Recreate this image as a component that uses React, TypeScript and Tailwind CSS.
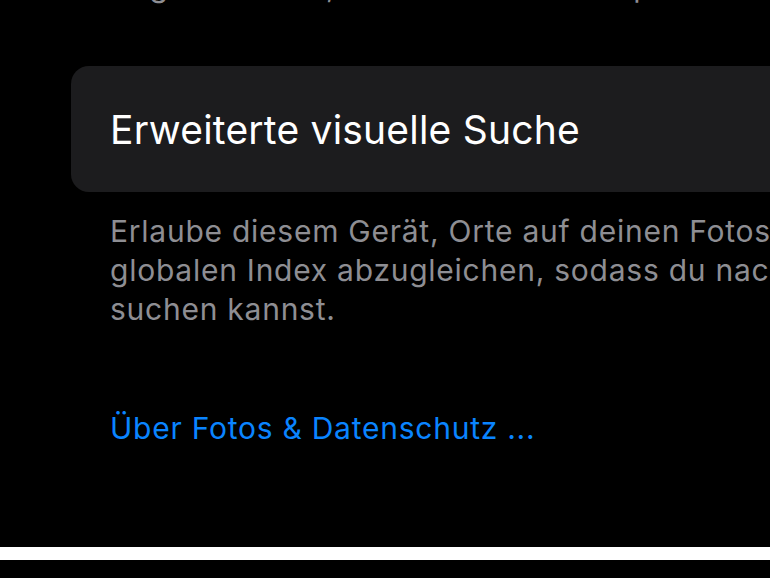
import React from 'react';

const SettingsFootnote = ({ lines, className }: { lines: string[]; className?: string }) => (
    <p className={`whitespace-nowrap text-[30px] leading-[39px] tracking-[0.75px] text-[#8e8e93] ${className ?? ''}`}>
        {lines.map((line, i) => (
            <span key={i} className="block">
                {line}
            </span>
        ))}
    </p>
);

export default function App() {
    return (
        <div className="flex h-[578px] w-[770px] flex-col overflow-hidden bg-black font-['Inter','Noto_Sans',sans-serif] antialiased">
            <div className="flex h-[547px] flex-col pl-[71px]">
                {/* tail of the previous footnote, mostly scrolled away */}
                <SettingsFootnote
                    className="-mt-[33px] pl-[38px]"
                    lines={['Abgelehnt und, wie beim letzten Export']}
                />

                {/* grouped cell */}
                <div className="mt-[60px] flex h-[126px] w-[760px] shrink-0 items-center rounded-l-[18px] bg-[#1c1c1e] pl-[39px]">
                    <span className="whitespace-nowrap text-[39px] leading-none tracking-[0.2px] text-white">
                        Erweiterte visuelle Suche
                    </span>
                </div>

                <SettingsFootnote
                    className="mt-[20px] pl-[39px]"
                    lines={[
                        'Erlaube diesem Gerät, Orte auf deinen Fotos privat mit einem',
                        'globalen Index abzugleichen, sodass du nach Orten',
                        'suchen kannst.',
                    ]}
                />

                <a className="mt-[80px] whitespace-nowrap pl-[39px] text-[30px] leading-[39px] tracking-[0.75px] text-[#0a84ff]">
                    Über Fotos &amp; Datenschutz ...
                </a>
            </div>
            <div className="h-[13px] shrink-0 bg-white" />
            <div className="flex-1 bg-black" />
        </div>
    );
}
